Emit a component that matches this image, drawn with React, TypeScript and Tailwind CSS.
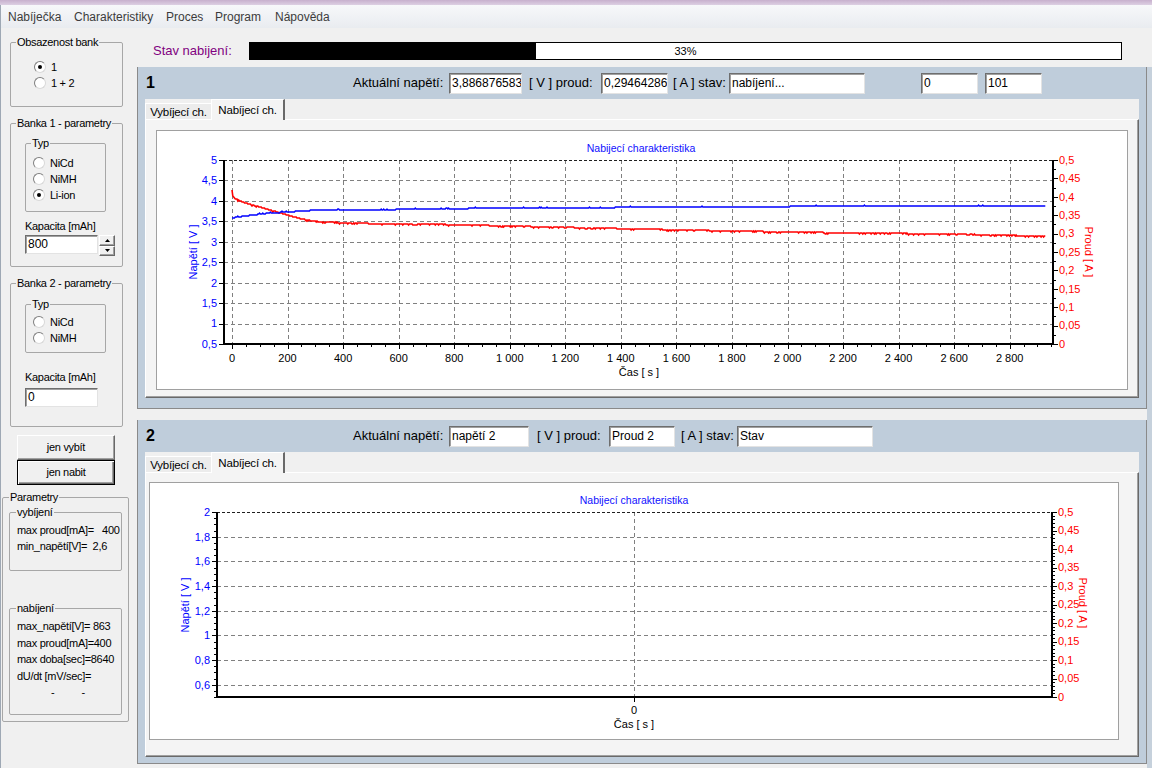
import React from 'react'

type Pt = [number, number]

function fmtNum(v: number) {
  return String(parseFloat(v.toFixed(3))).replace('.', ',')
}

function fmtTime(t: number) {
  return t >= 1000 ? `${Math.floor(t / 1000)} ${String(t % 1000).padStart(3, '0')}` : String(t)
}

function range(from: number, to: number, step: number) {
  const out: number[] = []
  for (let v = from; v <= to + 1e-9; v += step) out.push(parseFloat(v.toFixed(4)))
  return out
}

function interp(pts: Pt[], t: number) {
  for (let i = 1; i < pts.length; i++) {
    const [t0, y0] = pts[i - 1]
    const [t1, y1] = pts[i]
    if (t <= t1) return y0 + ((t - t0) / (t1 - t0)) * (y1 - y0)
  }
  return pts[pts.length - 1][1]
}

// chart 1 measured data, in page pixels
const T0X = 232
const PX_PER_S = 0.27775

const blueAnchors: Pt[] = [
  [0, 218], [20, 217], [60, 215.5], [120, 213.5], [200, 212], [280, 210.5], [340, 209.6],
  [840, 209.4], [850, 208.4], [1370, 208.4], [1380, 207.4], [2000, 207.4], [2010, 206.4], [2930, 206.3],
]

const redAnchors: Pt[] = [
  [0, 190], [2, 195], [8, 198], [30, 201], [60, 204], [100, 207], [150, 211], [200, 215],
  [250, 219], [310, 221.6], [450, 223.4], [700, 224], [1000, 226], [1400, 228.6], [1800, 231],
  [2200, 232.8], [2600, 234], [2900, 236], [2930, 236],
]

function buildSeries(anchors: Pt[], noise: number, dir: number, seed0: number) {
  let seed = seed0
  const rnd = () => {
    seed = (seed * 16807) % 2147483647
    return seed / 2147483647
  }
  const pts: string[] = []
  for (let t = 0; t <= 2930; t += 3) {
    let y = interp(anchors, t)
    if (t > 20 && rnd() < noise) y += dir
    pts.push(`${(T0X + t * PX_PER_S).toFixed(1)},${Math.round(y)}`)
  }
  return pts.join(' ')
}

const bluePts = buildSeries(blueAnchors, 0.03, -1, 11)
const redPts = buildSeries(redAnchors, 0.14, 1, 7)

type ChartProps = {
  ox: number
  oy: number
  w: number
  h: number
  l: number
  r: number
  t: number
  b: number
  vMin: number
  vMax: number
  vLabels: number[]
  vMinor: number[]
  iMinor: number[]
  xTicks: number[]
  xLabels: string[]
  xMinor: number[]
  title: Pt
  cas: Pt
  labelY: number
  vTitle: Pt
  iTitle: Pt
  children?: React.ReactNode
}

function Chart(p: ChartProps) {
  const vy = (v: number) => p.b - ((v - p.vMin) / (p.vMax - p.vMin)) * (p.b - p.t)
  const iy = (i: number) => p.b - (i / 0.5) * (p.b - p.t)
  const crisp = (n: number) => Math.round(n) + 0.5
  const iLabels = range(0, 0.5, 0.05)
  return (
    <svg
      width={p.w}
      height={p.h}
      viewBox={`${p.ox} ${p.oy} ${p.w} ${p.h}`}
      className="block"
      fontFamily="'Liberation Sans', Arial, sans-serif"
    >
      <text x={p.title[0]} y={p.title[1]} fontSize={10.5} fill="#1010ff" textAnchor="middle">
        Nabijecí charakteristika
      </text>

      {/* grid */}
      {p.vLabels
        .filter(v => v > p.vMin + 1e-6 && v < p.vMax - 1e-6)
        .map(v => (
          <line key={`g${v}`} x1={p.l} x2={p.r} y1={crisp(vy(v))} y2={crisp(vy(v))} stroke="#808080" strokeDasharray="4 3" />
        ))}
      {p.xTicks.map(x => (
        <line key={`gx${x}`} x1={crisp(x)} x2={crisp(x)} y1={p.t} y2={p.b} stroke="#808080" strokeDasharray="4 3" />
      ))}
      <line x1={p.l} x2={p.r} y1={p.t + 0.5} y2={p.t + 0.5} stroke="#202020" strokeDasharray="3 2" />

      {p.children}

      {/* axes */}
      <line x1={p.l} x2={p.l} y1={p.t} y2={p.b + 1} stroke="#000" strokeWidth={2} />
      <line x1={p.r} x2={p.r} y1={p.t} y2={p.b + 1} stroke="#000" strokeWidth={2} />
      <line x1={p.l - 1} x2={p.r + 1} y1={p.b} y2={p.b} stroke="#000" strokeWidth={2} />

      {/* ticks */}
      {p.vMinor.map(v => (
        <line key={`vm${v}`} x1={p.l - 3} x2={p.l} y1={crisp(vy(v))} y2={crisp(vy(v))} stroke="#000" />
      ))}
      {p.vLabels.map(v => (
        <line key={`vt${v}`} x1={p.l - 5} x2={p.l} y1={crisp(vy(v))} y2={crisp(vy(v))} stroke="#000" />
      ))}
      {p.iMinor.map(i => (
        <line key={`im${i}`} x1={p.r} x2={p.r + 3} y1={crisp(iy(i))} y2={crisp(iy(i))} stroke="#000" />
      ))}
      {iLabels.map(i => (
        <line key={`it${i}`} x1={p.r} x2={p.r + 5} y1={crisp(iy(i))} y2={crisp(iy(i))} stroke="#000" />
      ))}
      {p.xMinor.map(x => (
        <line key={`xm${x}`} x1={crisp(x)} x2={crisp(x)} y1={p.b} y2={p.b + 3} stroke="#000" />
      ))}
      {p.xTicks.map(x => (
        <line key={`xt${x}`} x1={crisp(x)} x2={crisp(x)} y1={p.b} y2={p.b + 5} stroke="#000" />
      ))}

      {/* labels */}
      {p.vLabels.map(v => (
        <text key={`vl${v}`} x={p.l - 7} y={vy(v)} dy="0.35em" fontSize={11} fill="#0000ff" textAnchor="end">
          {fmtNum(v)}
        </text>
      ))}
      {iLabels.map(i => (
        <text key={`il${i}`} x={p.r + 6} y={iy(i)} dy="0.35em" fontSize={11} fill="#ff0000">
          {fmtNum(i)}
        </text>
      ))}
      {p.xTicks.map((x, k) => (
        <text key={`xl${x}`} x={x} y={p.labelY} fontSize={11} fill="#000" textAnchor="middle">
          {p.xLabels[k]}
        </text>
      ))}
      <text x={p.cas[0]} y={p.cas[1]} fontSize={11} fill="#000" textAnchor="middle">
        Čas [ s ]
      </text>
      <text
        x={p.vTitle[0]}
        y={p.vTitle[1]}
        dy="0.35em"
        fontSize={11}
        fill="#0000ff"
        textAnchor="middle"
        transform={`rotate(-90 ${p.vTitle[0]} ${p.vTitle[1]})`}
      >
        Napětí [ V ]
      </text>
      <text
        x={p.iTitle[0]}
        y={p.iTitle[1]}
        dy="0.35em"
        fontSize={11}
        fill="#ff0000"
        textAnchor="middle"
        transform={`rotate(90 ${p.iTitle[0]} ${p.iTitle[1]})`}
      >
        Proud [ A ]
      </text>
    </svg>
  )
}

const chart1Ticks = range(0, 2800, 200)
const chart1Minor = range(0, 2950, 50).filter(t => t % 200 !== 0)

function Chart1() {
  return (
    <Chart
      ox={157}
      oy={131}
      w={970}
      h={258}
      l={224}
      r={1053}
      t={160}
      b={344}
      vMin={0.5}
      vMax={5}
      vLabels={range(0.5, 5, 0.5)}
      vMinor={[]}
      iMinor={range(0, 0.5, 0.025)}
      xTicks={chart1Ticks.map(t => T0X + t * PX_PER_S)}
      xLabels={chart1Ticks.map(fmtTime)}
      xMinor={chart1Minor.map(t => T0X + t * PX_PER_S)}
      title={[641, 152]}
      cas={[639, 376]}
      labelY={362}
      vTitle={[193, 252]}
      iTitle={[1089, 252]}
    >
      <polyline points={redPts} fill="none" stroke="#ff0000" strokeWidth={1.6} />
      <polyline points={bluePts} fill="none" stroke="#0000ff" strokeWidth={1.3} />
    </Chart>
  )
}

function Chart2() {
  return (
    <Chart
      ox={150}
      oy={483}
      w={968}
      h={256}
      l={217}
      r={1052}
      t={512}
      b={697}
      vMin={0.5}
      vMax={2}
      vLabels={range(0.6, 2, 0.2)}
      vMinor={range(0.5, 2, 0.05)}
      iMinor={range(0, 0.5, 0.01)}
      xTicks={[634]}
      xLabels={['0']}
      xMinor={[]}
      title={[634, 504]}
      cas={[634, 728]}
      labelY={714}
      vTitle={[185, 605]}
      iTitle={[1083, 603]}
    />
  )
}

// the legend sits in the top border; padding goes on the inner box so it doesn't push the legend
function GroupBox({
  title,
  outer,
  inner = '',
  legendClass = 'ml-[5px]',
  children,
}: {
  title: string
  outer: string
  inner?: string
  legendClass?: string
  children?: React.ReactNode
}) {
  return (
    <fieldset className={`border border-[#a7a7a7] rounded-[2px] shrink-0 ${outer}`}>
      <legend className={`${legendClass} px-[1px] text-[11px] leading-[13px] tracking-[-0.3px] whitespace-nowrap`}>{title}</legend>
      <div className={inner}>{children}</div>
    </fieldset>
  )
}

function Radio({ label, checked = false }: { label: string; checked?: boolean }) {
  return (
    <div className="h-[16px] flex items-center">
      <div className="w-[12px] h-[12px] rounded-full bg-white border border-t-[#7e7e7e] border-l-[#7e7e7e] border-r-[#d8d8d8] border-b-[#d8d8d8] flex items-center justify-center">
        {checked && <div className="w-[4px] h-[4px] rounded-full bg-black" />}
      </div>
      <span className="ml-[5px] text-[11px] tracking-[-0.3px]">{label}</span>
    </div>
  )
}

function TextBox({ value, className }: { value: string; className: string }) {
  return (
    <div
      className={`shrink-0 bg-white border border-t-[#6e6e6e] border-l-[#6e6e6e] border-r-[#e3e3e3] border-b-[#e3e3e3] shadow-[inset_1px_1px_0_#a0a0a0] text-[12px] pl-[2px] overflow-hidden whitespace-nowrap ${className}`}
    >
      {value}
    </div>
  )
}

function Spinner() {
  return (
    <div className="w-[16px] h-[21px] flex flex-col">
      {[0, 1].map(k => (
        <div
          key={k}
          className="flex-1 bg-[#f0f0f0] border border-t-white border-l-white border-r-[#696969] border-b-[#696969] shadow-[inset_-1px_-1px_0_#a0a0a0] flex items-center justify-center"
        >
          <svg width="5" height="3" viewBox="0 0 5 3">
            <path d={k === 0 ? 'M0 3 L2.5 0 L5 3 Z' : 'M0 0 L2.5 3 L5 0 Z'} fill="#000" />
          </svg>
        </div>
      ))}
    </div>
  )
}

function LeftColumn() {
  const line = 'text-[11px] tracking-[-0.3px] whitespace-pre'
  return (
    <div className="w-[136px] shrink-0 flex flex-col items-start">
      <GroupBox title="Obsazenost bank" outer="ml-[9px] mt-[8px] w-[113px] h-[71px]" inner="pl-[23px] pt-[10px]">
        <Radio label="1" checked />
        <Radio label="1 + 2" />
      </GroupBox>

      <GroupBox title="Banka 1 - parametry" outer="ml-[9px] mt-[10px] w-[113px] h-[150px]" inner="pl-[14px] pt-[7px]">
        <GroupBox title="Typ" outer="w-[81px] h-[75px]" inner="pl-[7px] pt-[5px]">
          <Radio label="NiCd" />
          <Radio label="NiMH" />
          <Radio label="Li-ion" checked />
        </GroupBox>
        <div className="mt-[8px] text-[11px] leading-[13px] tracking-[-0.3px]">Kapacita [mAh]</div>
        <div className="mt-[2px] flex items-start gap-[1px]">
          <TextBox value="800" className="w-[73px] h-[19px] leading-[17px] text-[11px]" />
          <Spinner />
        </div>
      </GroupBox>

      <GroupBox title="Banka 2 - parametry" outer="ml-[9px] mt-[10px] w-[113px] h-[150px]" inner="pl-[14px] pt-[8px]">
        <GroupBox title="Typ" outer="w-[81px] h-[55px]" inner="pl-[7px] pt-[3px]">
          <Radio label="NiCd" />
          <Radio label="NiMH" />
        </GroupBox>
        <div className="mt-[18px] text-[11px] leading-[13px] tracking-[-0.3px]">Kapacita [mAh]</div>
        <TextBox value="0" className="mt-[4px] w-[73px] h-[19px] leading-[17px] text-[11px]" />
      </GroupBox>

      <button className="ml-[16px] mt-[8px] w-[98px] h-[25px] bg-[#f0f0f0] border border-t-white border-l-white border-r-[#696969] border-b-[#696969] shadow-[inset_-1px_-1px_0_#a0a0a0] text-[11px] tracking-[-0.3px]">
        jen vybít
      </button>
      <button className="ml-[16px] w-[98px] h-[25px] bg-[#f0f0f0] border border-black shadow-[inset_1px_1px_0_#fff,inset_-1px_-1px_0_#696969,inset_-2px_-2px_0_#a0a0a0] text-[11px] tracking-[-0.3px]">
        jen nabit
      </button>

      <GroupBox title="Parametry" legendClass="ml-[6px]" outer="ml-[1px] mt-[6px] w-[127px] h-[231px]" inner="pl-[6px] pt-[2px]">
        <GroupBox title="vybíjení" legendClass="ml-[6px]" outer="w-[113px] h-[65px]" inner="pl-[7px] pt-[3px]">
          <div className={`${line} leading-[16px]`}>max proud[mA]=   400</div>
          <div className={`${line} leading-[16px]`}>min_napětí[V]=  2,6</div>
        </GroupBox>
        <GroupBox title="nabíjení" legendClass="ml-[6px]" outer="mt-[31px] w-[113px] h-[113px]" inner="pl-[7px] pt-[3px]">
          <div className={`${line} leading-[16.5px]`}>max_napětí[V]= 863</div>
          <div className={`${line} leading-[16.5px]`}>max proud[mA]=400</div>
          <div className={`${line} leading-[16.5px]`}>max doba[sec]=8640</div>
          <div className={`${line} leading-[16.5px]`}>dU/dt [mV/sec]=</div>
          <div className={`${line} leading-[16.5px]`}>
            <span className="ml-[34px]">-</span>
            <span className="ml-[27px]">-</span>
          </div>
        </GroupBox>
      </GroupBox>
    </div>
  )
}

function Tabs() {
  return (
    <div className="h-[20px] flex items-end shrink-0">
      <div className="h-[16px] w-[66px] border-t border-l border-t-white border-l-white bg-[#ececec] text-[11.5px] leading-[14px] tracking-[-0.2px] flex items-center justify-center">
        Vybíjecí ch.
      </div>
      <div className="relative z-10 -mb-[1px] h-[21px] w-[74px] border-t border-l border-t-white border-l-white border-r-2 border-r-[#696969] bg-[#f4f4f4] text-[11.5px] leading-[14px] tracking-[-0.2px] flex items-start pt-[3px] justify-center">
        Nabíjecí ch.
      </div>
    </div>
  )
}

const pageCls =
  'border border-t-white border-l-white border-r-[#696969] border-b-[#696969] shadow-[inset_-1px_-1px_0_#a0a0a0] bg-[#f4f4f4]'

function Panel1() {
  const lbl = 'shrink-0 text-[13px] whitespace-nowrap'
  return (
    <div className="h-[342px] shrink-0 bg-[#bfcddb] border-l border-r border-b border-[#8a8a8a] flex flex-col">
      <div className="h-[32px] flex items-center pl-[8px] shrink-0">
        <span className="w-[207px] shrink-0 text-[16px] font-bold">1</span>
        <span className={`${lbl} w-[96px]`}>Aktuální napětí:</span>
        <TextBox value="3,8868765830" className="w-[73px] h-[21px] leading-[19px]" />
        <span className={`${lbl} w-[79px] pl-[7px]`}>[ V ] proud:</span>
        <TextBox value="0,2946428654" className="w-[67px] h-[21px] leading-[19px]" />
        <span className={`${lbl} w-[61px] pl-[5px]`}>[ A ] stav:</span>
        <TextBox value="nabíjení..." className="w-[136px] h-[21px] leading-[19px]" />
        <span className="w-[56px] shrink-0" />
        <TextBox value="0" className="w-[57px] h-[21px] leading-[19px]" />
        <span className="w-[7px] shrink-0" />
        <TextBox value="101" className="w-[57px] h-[21px] leading-[19px]" />
      </div>
      <div className="ml-[7px] w-[994px] h-[299px] bg-[#f0f0f0] flex flex-col">
        <Tabs />
        <div className={`h-[279px] ${pageCls} pl-[10px] pt-[10px]`}>
          <div className="w-[972px] h-[260px] bg-white border border-[#a0a0a0]">
            <Chart1 />
          </div>
        </div>
      </div>
    </div>
  )
}

function Panel2() {
  const lbl = 'shrink-0 text-[13px] whitespace-nowrap'
  return (
    <div className="mt-[11px] h-[344px] shrink-0 bg-[#bfcddb] border-l border-r border-b border-[#8a8a8a] flex flex-col">
      <div className="h-[32px] flex items-center pl-[8px] shrink-0">
        <span className="w-[207px] shrink-0 text-[16px] font-bold">2</span>
        <span className={`${lbl} w-[96px]`}>Aktuální napětí:</span>
        <TextBox value="napětí 2" className="w-[80px] h-[21px] leading-[19px]" />
        <span className={`${lbl} w-[80px] pl-[8px]`}>[ V ] proud:</span>
        <TextBox value="Proud 2" className="w-[66px] h-[21px] leading-[19px]" />
        <span className={`${lbl} w-[62px] pl-[6px]`}>[ A ] stav:</span>
        <TextBox value="Stav" className="w-[136px] h-[21px] leading-[19px]" />
      </div>
      <div className="ml-[7px] w-[994px] h-[305px] bg-[#f0f0f0] flex flex-col">
        <Tabs />
        <div className={`h-[285px] ${pageCls} pl-[3px] pt-[9px]`}>
          <div className="w-[970px] h-[258px] bg-white border border-[#a0a0a0]">
            <Chart2 />
          </div>
        </div>
      </div>
    </div>
  )
}

function RightColumn() {
  return (
    <div className="flex-1 flex flex-col min-w-0">
      <div className="h-[39px] shrink-0 flex items-start pt-[14px]">
        <span className="w-[112px] shrink-0 pl-[16px] text-[13px] leading-[18px] text-[#800080]">Stav nabijení:</span>
        <div className="relative w-[873px] h-[18px] border border-black bg-white">
          <div className="w-[286px] h-full bg-black" />
          <div className="absolute inset-0 flex items-center justify-center text-[11px]">33%</div>
        </div>
      </div>
      <div className="flex-1 flex min-h-0">
        <div className="w-[1010px] shrink-0 flex flex-col">
          <Panel1 />
          <Panel2 />
        </div>
        <div className="flex-1 bg-[#c6d1dc]" />
      </div>
    </div>
  )
}

const menuItems: [string, string][] = [
  ['Nabíječka', 'w-[66px]'],
  ['Charakteristiky', 'w-[92px]'],
  ['Proces', 'w-[49px]'],
  ['Program', 'w-[60px]'],
  ['Nápověda', 'w-[70px]'],
]

export default function App() {
  return (
    <div className="w-[1152px] h-[768px] overflow-hidden bg-[#f0f0f0] font-['Liberation_Sans',Arial,sans-serif] text-black flex flex-col">
      <div className="h-[5px] shrink-0 bg-gradient-to-b from-[#c7b0cd] to-[#ddd0e3]" />
      <div className="flex-1 flex flex-col min-h-0 border-l border-[#9ea8b4]">
        <div className="h-[23px] shrink-0 flex items-center pl-[7px] bg-gradient-to-b from-[#f7f8fa] to-[#e9ecf0] text-[12px] text-[#3c3c3c]">
          {menuItems.map(([name, w]) => (
            <span key={name} className={`${w} shrink-0`}>
              {name}
            </span>
          ))}
        </div>
        <div className="flex-1 flex min-h-0">
          <LeftColumn />
          <RightColumn />
        </div>
      </div>
    </div>
  )
}
